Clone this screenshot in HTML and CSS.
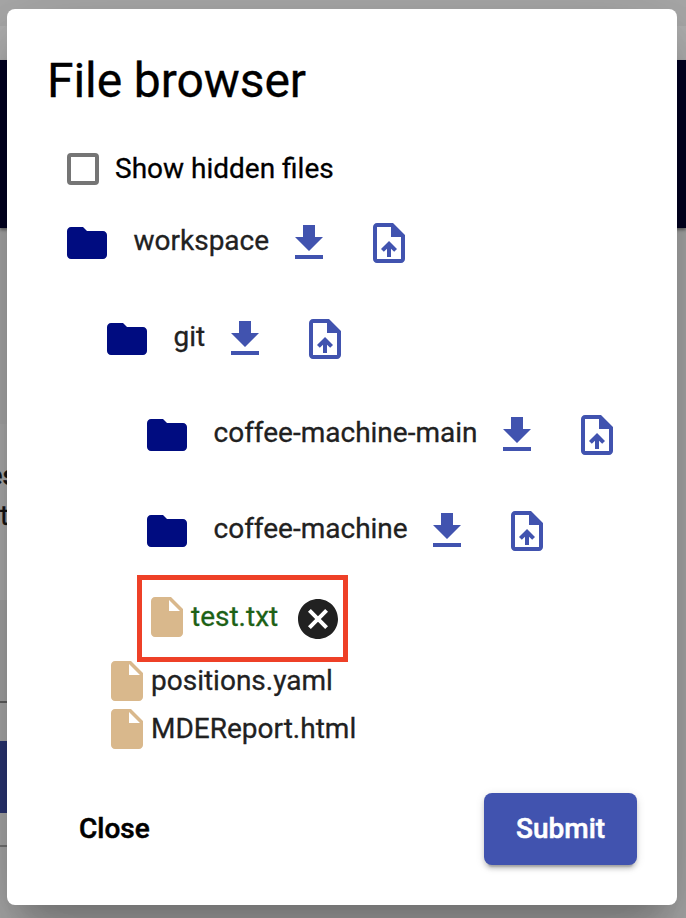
FILE: index.html
```html
<!DOCTYPE html>
<html lang="en">
<head>
<meta charset="utf-8">
<title>File browser</title>
<link rel="stylesheet" href="styles.css">
</head>
<body>
<svg class="sprite" aria-hidden="true">
  <symbol id="folder" viewBox="0 0 24 24"><path d="M10 4H4c-1.1 0-1.99.9-1.99 2L2 18c0 1.1.9 2 2 2h16c1.1 0 2-.9 2-2V8c0-1.1-.9-2-2-2h-8l-2-2z"/></symbol>
  <symbol id="download" viewBox="0 0 24 24"><path d="M5 20h14v-2H5v2zM19 9h-4V3H9v6H5l7 7 7-7z"/></symbol>
  <symbol id="upload" viewBox="0 0 24 24"><path d="M14 2H6c-1.1 0-1.99.9-1.99 2L4 20c0 1.1.89 2 1.99 2H18c1.1 0 2-.9 2-2V8l-6-6zm4 18H6V4h7v5h5v11zM8 15.01l1.41 1.41L11 14.84V19h2v-4.16l1.59 1.59L16 15.01 12.01 11 8 15.01z"/></symbol>
  <symbol id="file" viewBox="0 0 24 24"><path d="M6 2c-1.1 0-1.99.9-1.99 2L4 20c0 1.1.89 2 1.99 2H18c1.1 0 2-.9 2-2V8l-6-6H6zm7 7V3.5L18.5 9H13z"/></symbol>
  <symbol id="cancel" viewBox="0 0 24 24"><path d="M12 2C6.47 2 2 6.47 2 12s4.47 10 10 10 10-4.47 10-10S17.53 2 12 2zm5 13.59L15.59 17 12 13.41 8.41 17 7 15.59 10.59 12 7 8.41 8.41 7 12 10.59 15.59 7 17 8.41 13.41 12 17 15.59z"/></symbol>
</svg>

<div class="page" aria-hidden="true">
  <div class="page-top"></div>
  <div class="page-toolbar"></div>
  <div class="page-gap"></div>
  <div class="page-text"><div class="clip strong">es</div><div class="clip">t</div></div>
  <div class="page-field"></div>
  <div class="page-button"></div>
  <div class="page-footer"></div>
</div>

<main class="dialog" role="dialog" aria-labelledby="title">
  <h1 class="title" id="title">File browser</h1>
  <label class="option"><input class="checkbox" type="checkbox"><span>Show hidden files</span></label>

  <div class="tree">
    <div class="folder">
      <svg class="icon navy"><use href="#folder"/></svg><span class="name">workspace</span>
      <svg class="icon action"><use href="#download"/></svg><svg class="icon action"><use href="#upload"/></svg>
    </div>
    <div class="folder level-1">
      <svg class="icon navy"><use href="#folder"/></svg><span class="name">git</span>
      <svg class="icon action"><use href="#download"/></svg><svg class="icon action"><use href="#upload"/></svg>
    </div>
    <div class="folder level-2">
      <svg class="icon navy"><use href="#folder"/></svg><span class="name">coffee-machine-main</span>
      <svg class="icon action"><use href="#download"/></svg><svg class="icon action"><use href="#upload"/></svg>
    </div>
    <div class="folder level-2">
      <svg class="icon navy"><use href="#folder"/></svg><span class="name">coffee-machine</span>
      <svg class="icon action"><use href="#download"/></svg><svg class="icon action"><use href="#upload"/></svg>
    </div>
    <div class="highlight">
      <svg class="icon tan"><use href="#file"/></svg><span class="file-name added">test.txt</span><svg class="icon remove"><use href="#cancel"/></svg>
    </div>
    <div class="file"><svg class="icon tan"><use href="#file"/></svg><span class="file-name">positions.yaml</span></div>
    <div class="file"><svg class="icon tan"><use href="#file"/></svg><span class="file-name">MDEReport.html</span></div>
  </div>

  <div class="actions">
    <button class="button">Close</button>
    <button class="button primary">Submit</button>
  </div>
</main>
</body>
</html>
```
FILE: styles.css
```css
* { box-sizing: border-box; }

body {
  margin: 0;
  height: 918px;
  overflow: hidden;
  background: #adadad;
  font-family: Roboto, "Liberation Sans", sans-serif;
  font-size: 28px;
  color: #212121;
  -webkit-text-stroke: .3px currentColor;
}

.sprite { display: none; }

.page { height: 918px; color: #151515; }
.page-top { height: 60px; background: linear-gradient(#aaa 26px, #b2b2b2 26px); }
.page-toolbar { height: 168px; background: #000022; box-shadow: 0 2px 3px rgba(0, 0, 0, .4); }
.page-gap { height: 196px; }
.page-text, .page-field, .page-button, .page-footer { width: 320px; }
.page-text { height: 176px; padding-top: 32px; background: #b1b1b1; }
.clip { display: flex; justify-content: flex-end; width: 9px; height: 40px; line-height: 40px; }
.strong { width: 17px; font-weight: 500; }
.page-field { height: 103px; background: #a8a8a8; border-bottom: 2px solid #616161; }
.page-button { height: 72px; margin-top: 38px; background: #2b3675; }
.page-footer { height: 34px; border-bottom: 2px solid #777; }

.dialog {
  position: absolute;
  left: 7px;
  top: 9px;
  width: 670px;
  height: 896px;
  padding: 40px 40px 0;
  background: #fff;
  border-radius: 8px;
  box-shadow: 0 22px 30px -14px rgba(0, 0, 0, .2), 0 48px 76px 6px rgba(0, 0, 0, .14), 0 18px 92px 16px rgba(0, 0, 0, .12);
}

.title { margin: 0; height: 64px; font-size: 48px; font-weight: 400; line-height: 64px; letter-spacing: -.08px; color: #000; }

.option { display: flex; align-items: center; gap: 16px; height: 40px; margin: 36px 0 0 20px; color: #000; }
.option span { margin-top: -1px; }
.checkbox { appearance: none; width: 32px; height: 32px; margin: 0; border: 4px solid #757575; border-radius: 4px; }

.tree { margin: 6px 0 0 16px; }
.icon { flex: none; display: block; width: 48px; height: 48px; fill: currentColor; }
.navy { color: #000c80; }
.action { color: #4153af; }
.tan { color: #d9b88c; }

.folder { display: flex; align-items: center; height: 96px; }
.folder .name { margin: -6px 15.5px 0 22.5px; }
.folder .action + .action { margin-left: 32px; }
.level-1 { padding-left: 40px; }
.level-2 { padding-left: 80px; }

.highlight {
  display: flex;
  align-items: flex-start;
  width: 211px;
  height: 87px;
  margin: -4px 0 0 74px;
  padding: 13px 0 0 1px;
  border: 5px solid #ee4027;
}
.file { display: flex; height: 48px; margin-left: 40px; }
.highlight + .file { margin-top: -5px; }
.file-name { line-height: 48px; }
.added { color: #1d6116; }
.remove { margin: 2px 0 0 16px; }

.actions { display: flex; justify-content: space-between; margin-top: 40px; }
.button {
  height: 72px;
  padding: 0 32px;
  border: 0;
  border-radius: 8px;
  background: transparent;
  color: #000;
  font: 500 28px/72px Roboto, "Liberation Sans", sans-serif;
  -webkit-text-stroke: .5px currentColor;
}
.primary {
  width: 153px;
  background: #4153af;
  color: #fff;
  box-shadow: 0 6px 2px -4px rgba(0, 0, 0, .2), 0 4px 4px rgba(0, 0, 0, .14), 0 2px 10px rgba(0, 0, 0, .12);
}
```
